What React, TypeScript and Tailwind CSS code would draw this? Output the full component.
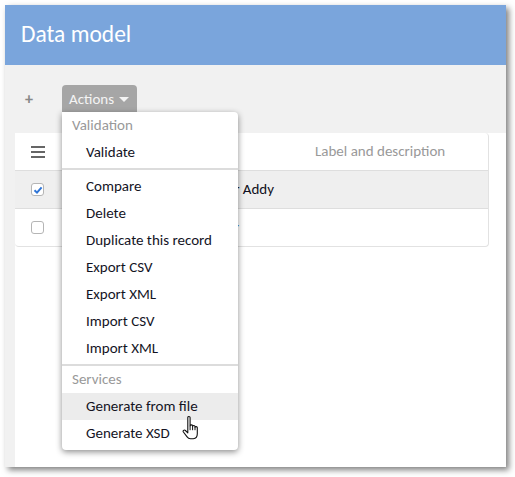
const font = { fontFamily: '"Carlito", Lato, "Liberation Sans", sans-serif' };

function MenuItem({ label, hover }: { label: string; hover?: boolean }) {
  return (
    <div className={`h-[27px] pl-6 leading-[27px] text-[#14141f] ${hover ? "bg-[#ececec]" : ""}`}>{label}</div>
  );
}

function GroupLabel({ label }: { label: string }) {
  return <div className="h-[27px] pl-[10px] leading-[27px] text-[#999999]">{label}</div>;
}

function HandCursor() {
  return (
    <svg width="20" height="26" viewBox="0 0 20 26" className="absolute left-[182px] top-[415px]">
      <path
        d="M5.8 2.6c0-1.5 2.3-1.5 2.3 0v8.2c.2-1.3 2.3-1.3 2.5 0v.6c.2-1.2 2.3-1.2 2.4.1v.8c.3-1 2.2-.9 2.3.3v6.2c0 2.6-1.6 4.8-4 5H8.5c-1.6 0-2.7-.9-3.6-2.2L1.4 17c-.9-1.3.8-2.7 2-1.5l2.4 2.3z"
        fill="#ffffff"
        stroke="#111111"
        strokeWidth="1.1"
        strokeLinejoin="round"
      />
      <path d="M8.1 10.8v4.4M10.6 11.4v3.8M13 12.2v3" stroke="#111111" strokeWidth="1" fill="none" />
    </svg>
  );
}

export default function App() {
  return (
    <div className="relative h-[477px] w-[515px] overflow-hidden bg-white text-[15px]" style={font}>
      <div className="ml-[5px] mt-[5px] flex h-[462px] w-[501px] flex-col bg-white shadow-[3px_3px_6px_rgba(0,0,0,0.5)]">
        <div className="flex h-[60px] shrink-0 items-center bg-[#7aa5dc] pl-4 text-[23.5px] text-white">Data model</div>
        <div className="flex h-[68px] shrink-0 items-start bg-[#f1f1f1] pl-5 pt-5">
          <span className="flex h-[27px] w-[37px] items-center pt-[1px] text-[16px] font-bold leading-none text-[#888888]">+</span>
          <div className="flex h-[27px] w-[75px] items-center gap-[5px] rounded-t bg-[#a6a6a6] pl-[7px] pt-[1px] text-[#f4f4f4]">
            Actions
            <span className="border-x-[5px] border-t-[5px] border-x-transparent border-t-[#f4f4f4]" />
          </div>
        </div>
        <div className="flex grow">
          <div className="w-[10px] bg-[#f1f1f1]" />
          <div className="h-[114px] w-[474px] rounded-r-[4px] rounded-bl-[4px] border-r border-b border-[#e2e2e2] bg-white">
            <div className="flex h-[38px] items-center border-b border-[#dedede]">
              <div className="ml-4 flex w-[14px] flex-col gap-[3px]">
                <span className="h-[2px] bg-[#666666]" />
                <span className="h-[2px] bg-[#666666]" />
                <span className="h-[2px] bg-[#666666]" />
              </div>
              <span className="ml-[270px] text-[#999999]">Label and description</span>
            </div>
            <div className="flex h-[38px] items-center border-b border-[#dedede] bg-[#efefef]">
              <span className="ml-4 flex h-[13px] w-[13px] items-center justify-center rounded-[3px] border border-[#b5b5b5] bg-white">
                <svg width="10" height="10" viewBox="0 0 10 10">
                  <path d="M1.5 5.2 4 7.6 8.6 2.4" fill="none" stroke="#2f75d6" strokeWidth="2" />
                </svg>
              </span>
              <span className="ml-[45px] w-[185px] whitespace-nowrap text-right text-[#111122]">Customer Addy</span>
            </div>
            <div className="flex h-[37px] items-center">
              <span className="ml-4 h-[13px] w-[13px] rounded-[3px] border border-[#b5b5b5] bg-white" />
              <span className="ml-[45px] w-[150px] text-right text-[#3a78c8]">r</span>
            </div>
          </div>
        </div>
      </div>

      <div className="absolute left-[62px] top-[112px] h-[338px] w-[176px] rounded-b-[4px] rounded-tr-[4px] bg-white shadow-[0_2px_6px_rgba(0,0,0,0.45)]">
        <GroupLabel label="Validation" />
        <MenuItem label="Validate" />
        <div className="mt-[2px] mb-[3px] h-[2px] bg-[#dcdcdc]" />
        {["Compare", "Delete", "Duplicate this record", "Export CSV", "Export XML", "Import CSV", "Import XML"].map((l) => (
          <MenuItem key={l} label={l} />
        ))}
        <div className="mt-[2px] h-[2px] bg-[#dcdcdc]" />
        <GroupLabel label="Services" />
        <MenuItem label="Generate from file" hover />
        <MenuItem label="Generate XSD" />
      </div>
      <HandCursor />
    </div>
  );
}
